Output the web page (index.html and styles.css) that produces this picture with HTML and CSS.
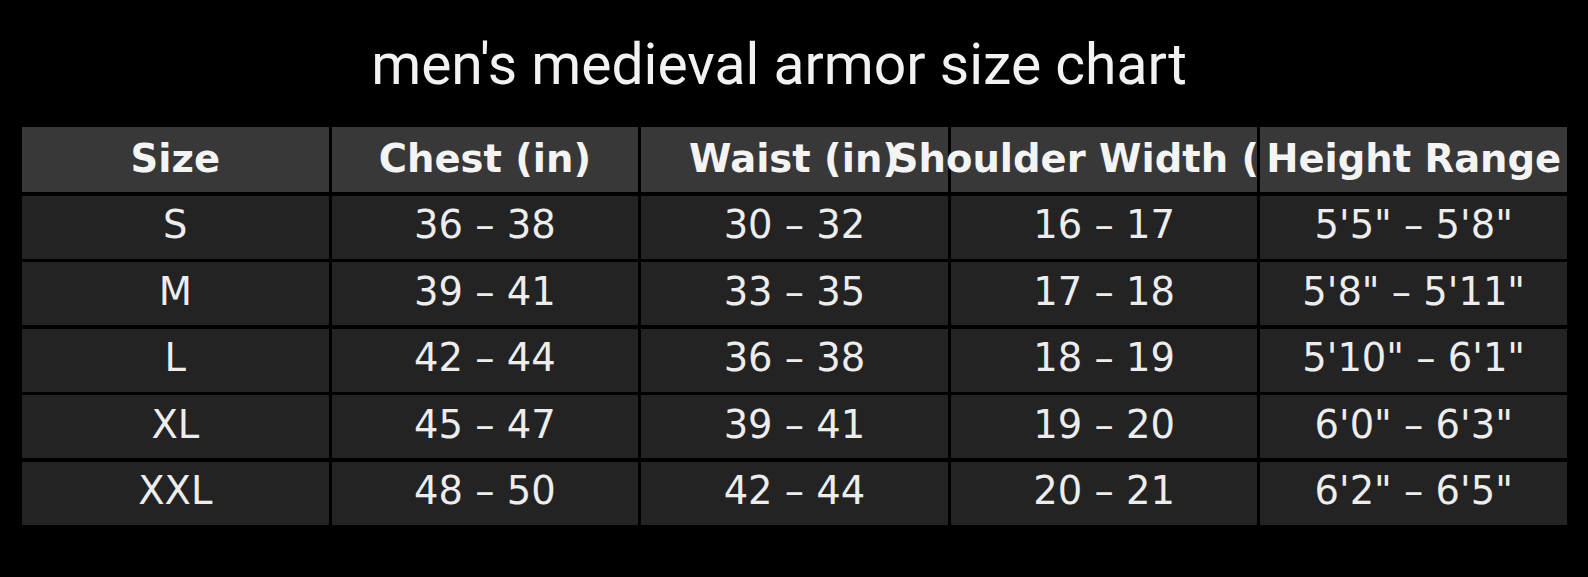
FILE: index.html
```html
<!DOCTYPE html>
<html>
<head>
<meta charset="utf-8">
<link rel="stylesheet" href="styles.css">
</head>
<body>
<div class="page">
  <h1 class="title">men's medieval armor size chart</h1>
  <div class="chart">
    <div class="cell head">Size</div>
    <div class="cell head">Chest (in)</div>
    <div class="cell head">Waist (in)</div>
    <div class="cell head">Shoulder Width (in)</div>
    <div class="cell head">Height Range</div>

    <div class="cell">S</div>
    <div class="cell">36 – 38</div>
    <div class="cell">30 – 32</div>
    <div class="cell">16 – 17</div>
    <div class="cell">5'5" – 5'8"</div>

    <div class="cell">M</div>
    <div class="cell">39 – 41</div>
    <div class="cell">33 – 35</div>
    <div class="cell">17 – 18</div>
    <div class="cell">5'8" – 5'11"</div>

    <div class="cell">L</div>
    <div class="cell">42 – 44</div>
    <div class="cell">36 – 38</div>
    <div class="cell">18 – 19</div>
    <div class="cell">5'10" – 6'1"</div>

    <div class="cell">XL</div>
    <div class="cell">45 – 47</div>
    <div class="cell">39 – 41</div>
    <div class="cell">19 – 20</div>
    <div class="cell">6'0" – 6'3"</div>

    <div class="cell">XXL</div>
    <div class="cell">48 – 50</div>
    <div class="cell">42 – 44</div>
    <div class="cell">20 – 21</div>
    <div class="cell">6'2" – 6'5"</div>
  </div>
</div>
</body>
</html>
```
FILE: styles.css
```css
html, body {
  margin: 0;
  padding: 0;
  background: #000;
}
.page {
  width: 1588px;
  height: 577px;
  background: #000;
  overflow: hidden;
}
.title {
  margin: 0;
  padding: 36px 30px 0 0;
  height: 127px;
  box-sizing: border-box;
  text-align: center;
  font-family: Roboto, "Liberation Sans", sans-serif;
  font-weight: 400;
  font-size: 57px;
  line-height: 57px;
  color: #f2f2f2;
}
.chart {
  margin-left: 22px;
  width: 1545px;
  display: grid;
  grid-template-columns: repeat(5, minmax(0, 1fr));
  grid-template-rows: 65px repeat(5, 63px);
  column-gap: 3px;
  row-gap: 3.5px;
  font-family: "DejaVu Sans", sans-serif;
}
.cell {
  position: relative;
  background: #232323;
  color: #ededed;
  font-size: 38.5px;
  display: flex;
  align-items: center;
  justify-content: center;
  white-space: nowrap;
  min-width: 0;
  padding-bottom: 5px;
  box-sizing: border-box;
}
.head {
  background: #383838;
  font-weight: 700;
  font-size: 38.5px;
  color: #f4f4f4;
  padding-bottom: 2px;
}
```
